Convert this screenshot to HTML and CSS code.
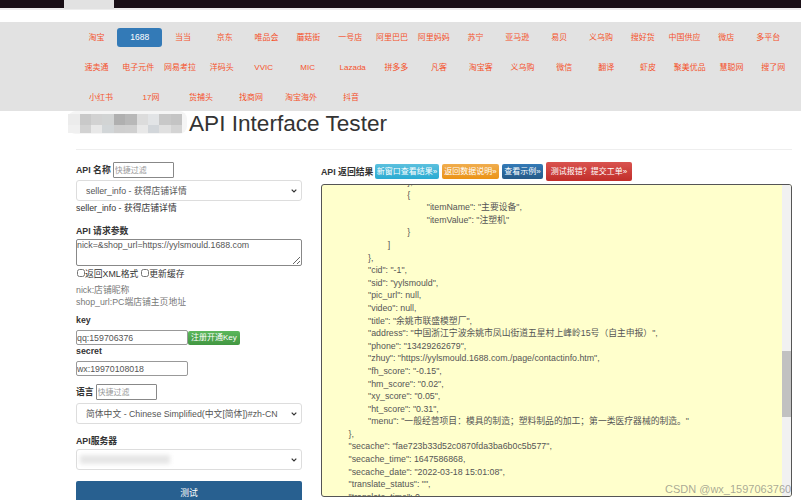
FILE: index.html
```html
<!DOCTYPE html>
<html lang="en">
    <head>
        <title>API Interface Tester</title>
        <link rel="stylesheet" href="styles.css">
    </head>
    <body>
        <div id="topbar"><div class="tab"></div></div>

        <div id="nav">
            <div class="row">
                <a>淘宝</a><a class="on">1688</a><a>当当</a><a>京东</a><a>唯品会</a><a>蘑菇街</a><a>一号店</a><a>阿里巴巴</a><a>阿里妈妈</a><a>苏宁</a><a>亚马逊</a><a>易贝</a><a>义乌购</a><a>搜好货</a><a>中国供应</a><a>微店</a><a>多平台</a>
            </div>
            <div class="row">
                <a>速卖通</a><a>电子元件</a><a>网易考拉</a><a>洋码头</a><a class="w42">VVIC</a><a class="w46">MIC</a><a class="w44">Lazada</a><a class="w43">拼多多</a><a>凡客</a><a>淘宝客</a><a>义乌购</a><a>微信</a><a>翻译</a><a>虾皮</a><a>聚美优品</a><a>慧聪网</a><a>搜了网</a>
            </div>
            <div class="row row-wide">
                <a>小红书</a><a>17网</a><a>货捕头</a><a>找商网</a><a>淘宝海外</a><a>抖音</a>
            </div>
        </div>

        <div id="title">
            <svg class="mosaic" width="119" height="23" viewBox="0 0 119 23">
                <rect x="0" y="0" width="119" height="23" rx="8" fill="#f5f5f5"/>
                <rect x="0" y="3" width="12" height="11" fill="#ececec"/>
                <rect x="12" y="3" width="11" height="11" fill="#c9c9c9"/>
                <rect x="23" y="3" width="11" height="11" fill="#d2d2d2"/>
                <rect x="34" y="3" width="12" height="11" fill="#d2d4d4"/>
                <rect x="46" y="3" width="11" height="11" fill="#b0b0b0"/>
                <rect x="57" y="3" width="12" height="11" fill="#b8b8b8"/>
                <rect x="69" y="3" width="11" height="11" fill="#dcdcdc"/>
                <rect x="80" y="3" width="11" height="11" fill="#e2e4e6"/>
                <rect x="91" y="3" width="12" height="11" fill="#c8c8c8"/>
                <rect x="103" y="3" width="11" height="11" fill="#c4c4c4"/>
                <rect x="0" y="14" width="12" height="8" fill="#f0f0f0"/>
                <rect x="12" y="14" width="11" height="8" fill="#d2d2d2"/>
                <rect x="23" y="14" width="11" height="8" fill="#e8e8e8"/>
                <rect x="34" y="14" width="12" height="8" fill="#d2d6d8"/>
                <rect x="46" y="14" width="11" height="8" fill="#cfcfcf"/>
                <rect x="57" y="14" width="12" height="8" fill="#d0d0d0"/>
                <rect x="69" y="14" width="11" height="8" fill="#e8e8e8"/>
                <rect x="80" y="14" width="11" height="8" fill="#d2d6da"/>
                <rect x="91" y="14" width="12" height="8" fill="#e0e0e0"/>
                <rect x="103" y="14" width="11" height="8" fill="#d4d4d4"/>
            </svg>
            <h1>API Interface Tester</h1>
        </div>
        <div id="rule"></div>

        <div id="main">
            <div id="left">
                <div class="label-row"><b>API 名称</b><input class="filter" placeholder="快捷过滤"></div>
                <select class="pick"><option>seller_info - 获得店铺详情</option></select>
                <div class="api-desc">seller_info - 获得店铺详情</div>

                <div class="head params-head">API 请求参数</div>
                <textarea id="params">nick=&amp;shop_url=https://yylsmould.1688.com</textarea>
                <div class="checks">
                    <input type="checkbox">返回XML格式
                    <input type="checkbox" class="second">更新缓存
                </div>
                <div class="hint hint-first">nick:店铺昵称</div>
                <div class="hint">shop_url:PC端店铺主页地址</div>

                <div class="head key-head">key</div>
                <div class="key-row"><input class="cred" value="qq:159706376"><a class="btn-reg">注册开通Key</a></div>
                <div class="head secret-head">secret</div>
                <input class="cred" value="wx:19970108018">

                <div class="label-row lang-row"><b>语言</b><input class="filter" placeholder="快捷过滤"></div>
                <select class="pick"><option>简体中文 - Chinese Simplified(中文[简体])#zh-CN</option></select>

                <div class="head server-head">API服务器</div>
                <div class="server">
                    <select class="pick"><option></option></select>
                    <div class="smudge"></div>
                </div>
                <div id="run">测试</div>
            </div>

            <div id="right">
                <div class="result-bar">
                    <b>API 返回结果</b>
                    <a class="btn btn-info">新窗口查看结果»</a>
                    <a class="btn btn-warn">返回数据说明»</a>
                    <a class="btn btn-blue">查看示例»</a>
                    <a class="btn btn-red">测试报错？提交工单»</a>
                </div>
                <div id="output">
<pre>				},
				{
					"itemName": "主要设备",
					"itemValue": "注塑机"
				}
			]
		},
		"cid": "-1",
		"sid": "yylsmould",
		"pic_url": null,
		"video": null,
		"title": "余姚市联盛模塑厂",
		"address": "中国浙江宁波余姚市凤山街道五星村上峰岭15号（自主申报）",
		"phone": "13429262679",
		"zhuy": "https://yylsmould.1688.com./page/contactinfo.htm",
		"fh_score": "-0.15",
		"hm_score": "0.02",
		"xy_score": "0.05",
		"ht_score": "0.31",
		"menu": "一般经营项目：模具的制造；塑料制品的加工；第一类医疗器械的制造。"
	},
	"secache": "fae723b33d52c0870fda3ba6b0c5b577",
	"secache_time": 1647586868,
	"secache_date": "2022-03-18 15:01:08",
	"translate_status": "",
	"translate_time": 0,</pre>
                    <div class="scrollbar"><div class="thumb"></div></div>
                </div>
            </div>
        </div>

        <div id="watermark">CSDN @wx_1597063760</div>
    </body>
</html>
```

FILE: styles.css
```css
*{
    box-sizing: border-box;
    margin: 0px;
    padding: 0px;
}
html, body{
    height: 500px;
    overflow: hidden;
}
body{
    background-color: white;
    color: #333;
    font-family: "Liberation Sans", "Noto Sans CJK SC", sans-serif;
    font-size: 8.8px;
}

#topbar{
    height: 8px;
    background-color: #1a1017;
    padding-left: 64px;
    box-shadow: 0 2px 0 #eee;
}
.tab{
    width: 50px;
    height: 9px;
    background-color: #e2e2e2;
}

#nav{
    height: 89px;
    margin-top: 14px;
    padding-left: 75.5px;
    background-color: #e2e2e2;
}
.row{
    display: flex;
    height: 30px;
    align-items: center;
}
.row a{
    width: 41.8px;
    flex: none;
    color: #f5522c;
    font-size: 8px;
    text-align: center;
    line-height: 19px;
}
.row a.on{
    width: 44.8px;
    background-color: #337ab7;
    color: white;
    border-radius: 3px;
    font-size: 8.5px;
}
.row a.w42{ width: 42px; }
.row a.w46{ width: 46px; }
.row a.w44{ width: 44px; }
.row a.w43{ width: 43.4px; }
.row-wide a{ width: 50px; }
.row-wide{ padding-left: 0.5px; }

#title{
    display: flex;
    align-items: center;
    height: 23px;
    padding-left: 68px;
}
.mosaic{
    flex: none;
}
h1{
    margin: 2px 0 0 2px;
    font-size: 22.6px;
    font-weight: normal;
    line-height: 23px;
    white-space: nowrap;
}
#rule{
    height: 1px;
    margin: 15px 9px 0 76px;
    background-color: #eee;
}

#main{
    display: flex;
    padding: 12px 9px 0 76px;
}
#left{
    width: 226px;
    flex: none;
}
#right{
    width: 471px;
    margin-left: 19px;
}

b, .head{
    font-weight: bold;
    font-size: 8.8px;
    line-height: 12px;
}
.label-row{
    display: flex;
    align-items: center;
    gap: 2px;
    height: 16px;
    margin-bottom: 2px;
}
.filter{
    width: 61px;
    height: 16px;
    border: 1px solid #888;
    border-radius: 1px;
    padding-left: 1px;
    font-family: inherit;
    font-size: 8px;
}
.filter::placeholder{
    color: #999;
}
.pick{
    display: block;
    width: 226px;
    height: 21px;
    padding-left: 9px;
    appearance: none;
    background: white url("data:image/svg+xml,%3Csvg xmlns='http://www.w3.org/2000/svg' width='6' height='4'%3E%3Cpath d='M.7.7 3 3l2.3-2.3' fill='none' stroke='%23333' stroke-width='1.2'/%3E%3C/svg%3E") no-repeat right 4px center;
    border: 1px solid #ddd;
    border-radius: 3px;
    color: #555;
    font-family: inherit;
    font-size: 8.8px;
}
.api-desc{
    margin-top: 1px;
    line-height: 12px;
}
.params-head{
    margin-top: 11px;
}
#params{
    display: block;
    width: 226px;
    height: 27px;
    margin-top: 2px;
    border: 1px solid #888;
    border-radius: 2px;
    color: #555;
    font-family: inherit;
    font-size: 8.8px;
}
.checks{
    display: flex;
    align-items: center;
    height: 12px;
    margin-top: 1px;
}
.checks input{
    width: 8px;
    height: 8px;
    margin: 0 0 0 1px;
}
.checks input.second{
    margin-left: 3px;
}
.hint{
    color: #777;
    line-height: 12px;
}
.hint-first{
    margin-top: 5px;
}
.key-head{
    margin-top: 6px;
}
.key-row{
    display: flex;
    margin-top: 4px;
}
.cred{
    display: block;
    width: 112px;
    height: 15px;
    border: 1px solid #999;
    border-radius: 2px;
    color: #555;
    font-family: inherit;
    font-size: 8.8px;
}
.btn-reg{
    height: 14px;
    margin-top: 1px;
    padding: 0 3px;
    background-image: linear-gradient(#5cb85c, #419641);
    border-radius: 2px;
    color: white;
    font-size: 8px;
    line-height: 14px;
}
.secret-head{
    margin-bottom: 4px;
}
.lang-row{
    margin-top: 8px;
    margin-bottom: 3px;
}
.server-head{
    margin-top: 11px;
    margin-bottom: 2px;
}
.server{
    position: relative;
}
.smudge{
    position: absolute;
    left: 4px;
    top: 6px;
    width: 90px;
    height: 9px;
    background-color: #e6e6e6;
    filter: blur(2px);
}
#run{
    height: 25px;
    margin-top: 11px;
    background-color: #286090;
    border-radius: 2px;
    color: white;
    text-align: center;
    line-height: 24px;
}

.result-bar{
    display: flex;
    align-items: center;
    height: 19px;
}
.btn{
    height: 15px;
    margin-left: 3px;
    border-radius: 2px;
    color: white;
    font-size: 8px;
    text-align: center;
    line-height: 15px;
}
.result-bar b{
    width: 51px;
    flex: none;
    white-space: nowrap;
}
.btn-info{
    width: 64px;
    background-image: linear-gradient(#5bc0de, #2aabd2);
}
.btn-warn{
    width: 57px;
    background-image: linear-gradient(#f0ad4e, #eb9316);
}
.btn-blue{
    width: 41px;
    background-image: linear-gradient(#337ab7, #265a88);
}
.btn-red{
    width: 86px;
    height: 19px;
    background-image: linear-gradient(#d9534f, #c12e2a);
    line-height: 19px;
}
#output{
    position: relative;
    height: 313px;
    margin-top: 3px;
    overflow: hidden;
    background-color: #ffffcc;
    border: 1px solid #555;
    border-radius: 3px;
}
pre{
    margin-top: -9px;
    padding-left: 7px;
    color: #555;
    font-family: inherit;
    font-size: 8.8px;
    line-height: 12.6px;
    tab-size: 8;
}
.scrollbar{
    position: absolute;
    right: 0;
    top: 0;
    bottom: 0;
    width: 9px;
    background-color: #f1f1f1;
}
.thumb{
    height: 66px;
    margin-top: 166px;
    background-color: #c1c1c1;
}

#watermark{
    position: absolute;
    left: 665px;
    top: 483px;
    width: 136px;
    overflow: hidden;
    color: rgba(110, 110, 110, 0.6);
    font-size: 11px;
    white-space: nowrap;
}
```
